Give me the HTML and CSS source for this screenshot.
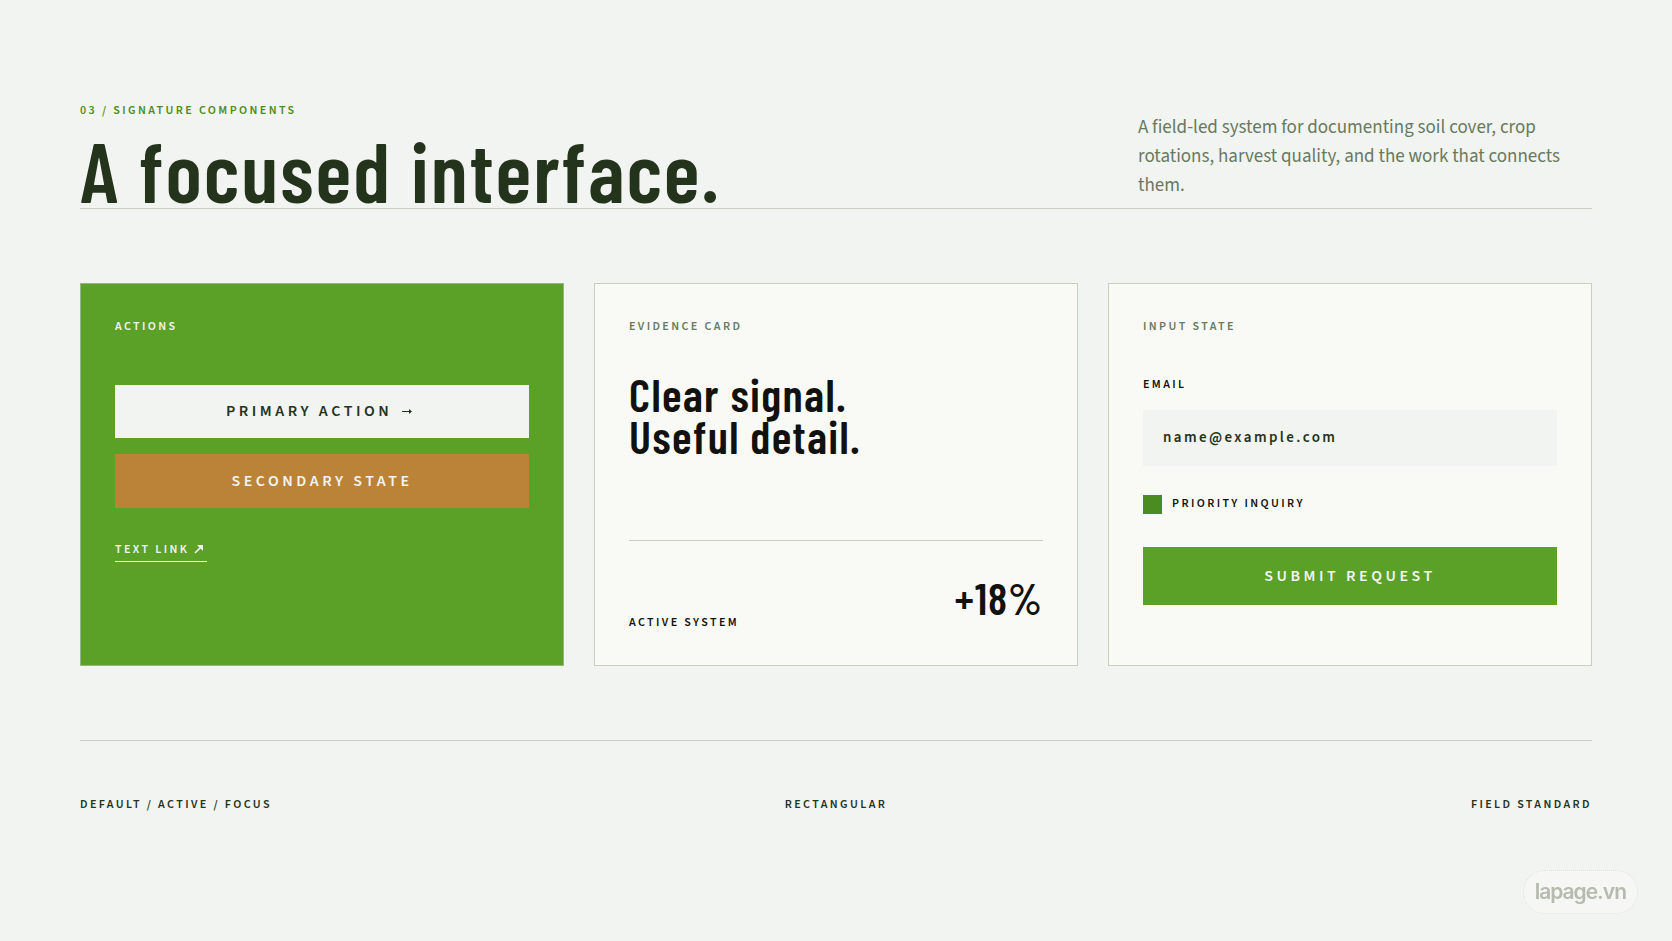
FILE: index.html
```html
<!DOCTYPE html>
<html lang="en">
<head>
<meta charset="utf-8">
<meta name="viewport" content="width=device-width, initial-scale=1">
<title>Signature components</title>
<link rel="stylesheet" href="styles.css">
</head>
<body>
<main class="page">
  <header class="intro">
    <div>
      <p class="label eyebrow">03 / SIGNATURE COMPONENTS</p>
      <h1 class="title">A focused interface.</h1>
    </div>
    <p class="lead">A field-led system for documenting soil cover, crop rotations, harvest quality, and the work that connects them.</p>
  </header>

  <div class="cards">
    <section class="card card-actions">
      <h2 class="label card-label">ACTIONS</h2>
      <div class="stack">
        <button class="button button-primary" type="button">PRIMARY ACTION
          <svg class="arrow" viewBox="0 0 12 10" aria-hidden="true"><path d="M1 5.500H9" fill="none" stroke="currentColor"/><path d="M8 3L11 5.500L8 8Z" fill="currentColor"/></svg>
        </button>
        <button class="button button-secondary" type="button">SECONDARY STATE</button>
      </div>
      <a class="label text-link" href="#">TEXT LINK
        <svg class="link-arrow" viewBox="0 0 10 10" aria-hidden="true"><path d="M1 9L7 3" fill="none" stroke="currentColor" stroke-width="1.600"/><path d="M3 1H9V7Z" fill="currentColor"/></svg>
      </a>
    </section>

    <section class="card card-evidence">
      <h2 class="label card-label">EVIDENCE CARD</h2>
      <p class="statement">Clear signal.<br>Useful detail.</p>
      <div class="metric">
        <span class="label">ACTIVE SYSTEM</span>
        <strong class="figure">+18%</strong>
      </div>
    </section>

    <section class="card">
      <h2 class="label card-label">INPUT STATE</h2>
      <form class="form">
        <label class="label" for="email">EMAIL</label>
        <input class="field" id="email" type="email" value="name@example.com">
        <div class="check">
          <input class="box" id="priority" type="checkbox" checked>
          <label class="label" for="priority">PRIORITY INQUIRY</label>
        </div>
        <button class="button button-submit" type="button">SUBMIT REQUEST</button>
      </form>
    </section>
  </div>

  <footer class="footer">
    <span class="label">DEFAULT / ACTIVE / FOCUS</span>
    <span class="label">RECTANGULAR</span>
    <span class="label footer-end">FIELD STANDARD</span>
  </footer>
</main>
<div class="badge">lapage.vn</div>
</body>
</html>
```
FILE: styles.css
```css
:root {
  --paper: #f2f4f1;
  --card: #f9faf5;
  --ink: #24331b;
  --black: #11120f;
  --muted: #687960;
  --green: #5ca127;
  --leaf: #4b8c20;
  --clay: #bb8338;
  --line: #c8cfc0;
  --sans: "Source Sans 3", "Source Sans Pro", "Noto Sans CJK SC", sans-serif;
  --display: "Barlow Condensed", "Liberation Sans Narrow", sans-serif;
}

* { box-sizing: border-box; }

body {
  margin: 0;
  min-height: 100vh;
  background: var(--paper);
  color: var(--ink);
  font-family: var(--sans);
}

h1, h2, p { margin: 0; }

.page { padding: 100px 80px 48px; }

.label {
  font-size: 12px;
  font-weight: 600;
  line-height: 22px;
  letter-spacing: 0.2em;
}

.intro {
  display: flex;
  justify-content: space-between;
  align-items: flex-start;
  height: 109px;
  border-bottom: 1px solid var(--line);
}

.eyebrow { color: var(--leaf); }

.title {
  margin-top: 6px;
  font-family: var(--display);
  font-size: 84px;
  font-weight: 600;
  line-height: 84px;
  letter-spacing: 2px;
  white-space: nowrap;
}

.lead {
  width: 454px;
  padding-top: 13px;
  color: var(--muted);
  font-size: 19px;
  line-height: 29px;
}

.cards {
  display: grid;
  grid-template-columns: repeat(3, 1fr);
  gap: 30px;
  margin-top: 74px;
}

.card {
  display: flex;
  flex-direction: column;
  min-height: 383px;
  padding: 32px 34px;
  background: var(--card);
  border: 1px solid var(--line);
  color: var(--black);
}

.card-label { color: var(--muted); }

.card-actions {
  background: var(--green);
  border-color: #9bb287;
  color: var(--paper);
}

.card-actions .card-label { color: var(--paper); }

.stack {
  display: grid;
  gap: 16px;
  margin-top: 47px;
}

.button {
  width: 100%;
  padding: 15px 16px;
  border: 0;
  font-family: var(--sans);
  font-size: 16px;
  font-weight: 600;
  line-height: 24px;
  letter-spacing: 0.22em;
}

.button-primary { background: var(--paper); color: var(--ink); line-height: 23px; }
.button-secondary { background: var(--clay); color: var(--paper); }
.button-submit { margin-top: 32px; padding: 17px 16px; background: var(--green); color: var(--paper); }

.arrow { width: 12px; height: 10px; margin: 0 5px 0 2px; }
.link-arrow { width: 10px; height: 10px; margin-right: 3px; vertical-align: -1px; }

.text-link {
  align-self: flex-start;
  margin-top: 31px;
  border-bottom: 1px solid currentColor;
  color: inherit;
  text-decoration: none;
}

.statement {
  margin-top: 35px;
  font-family: var(--display);
  font-size: 46px;
  font-weight: 600;
  line-height: 42px;
  letter-spacing: 0.03em;
}

.metric {
  display: flex;
  justify-content: space-between;
  align-items: flex-end;
  margin-top: auto;
  padding-top: 27px;
  border-top: 1px solid var(--line);
}

.metric .label { line-height: 20px; }

.figure {
  margin-bottom: 5px;
  font-family: var(--display);
  font-size: 44px;
  font-weight: 600;
  line-height: 60px;
  letter-spacing: 1px;
}

.form { margin-top: 36px; }
.form .label { display: block; }

.field {
  display: block;
  width: 100%;
  height: 56px;
  margin-top: 14px;
  padding: 0 20px 2px;
  border: 0;
  background: var(--paper);
  color: var(--ink);
  font-family: var(--sans);
  font-size: 15px;
  font-weight: 600;
  letter-spacing: 0.16em;
}

.check {
  display: flex;
  align-items: center;
  gap: 10px;
  margin-top: 27px;
}

.box {
  appearance: none;
  width: 19px;
  height: 19px;
  margin: 0;
  background: var(--leaf);
}

.footer {
  display: grid;
  grid-template-columns: 1fr auto 1fr;
  margin-top: 74px;
  padding-top: 53px;
  border-top: 1px solid var(--line);
}

.footer-end { text-align: right; }

.badge {
  position: fixed;
  right: 34px;
  bottom: 27px;
  padding: 6px 11px;
  border: 1px dotted #dfe2dc;
  border-radius: 22px;
  background: #f6f7f4;
  color: #b5bbae;
  font-family: Inter, sans-serif;
  font-size: 21px;
  font-weight: 600;
  line-height: 30px;
  letter-spacing: -1px;
}
```
